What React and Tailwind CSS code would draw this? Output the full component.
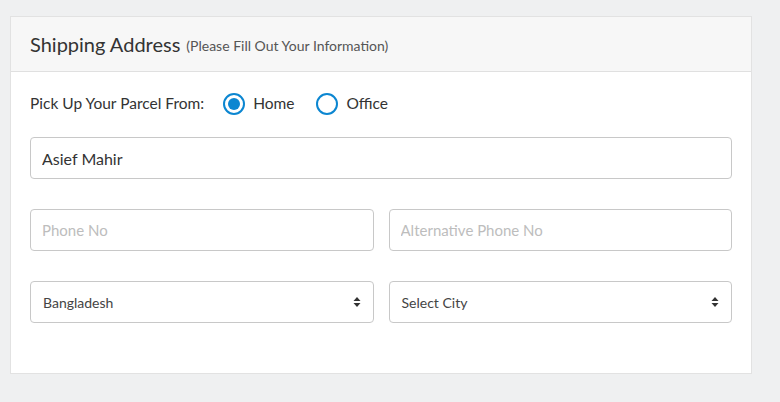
import React, { useState } from "react";

function Radio({ label, checked, onClick }) {
    return (
        <button type="button" onClick={onClick} className="flex items-center gap-[8px] text-[15.5px] text-[#333]">
            <span className="w-[22px] h-[22px] rounded-full border-2 border-[#0b86d1] flex items-center justify-center">
                {checked && <span className="w-[12px] h-[12px] rounded-full bg-[#0b86d1]" />}
            </span>
            {label}
        </button>
    );
}

function SortArrows() {
    return (
        <svg width="8" height="11" viewBox="0 0 8 11" className="absolute right-[13px] top-1/2 -translate-y-1/2 pointer-events-none">
            <path d="M4 0.5 L7.5 4.5 H0.5 Z" fill="#333" />
            <path d="M4 10.5 L7.5 6.5 H0.5 Z" fill="#333" />
        </svg>
    );
}

function Select({ value }) {
    return (
        <div className="relative">
            <div className="h-[42px] border border-[#c8c8c8] rounded-[4px] px-[12px] flex items-center text-[14px] text-[#444]">{value}</div>
            <SortArrows />
        </div>
    );
}

export default function App() {
    const [pickup, setPickup] = useState("home");

    return (
        <div className="w-[780px] h-[402px] bg-[#eff0f1] pt-4 pl-[10px]" style={{ fontFamily: "Lato, 'Open Sans', sans-serif" }}>
            <div className="w-[742px] h-[358px] bg-white border border-[#e2e2e2] flex flex-col">
                <div className="h-[55px] bg-[#f7f7f7] border-b border-[#e0e0e0] px-[19px] flex items-center gap-[6px]">
                    <span className="text-[20px] text-[#333]">Shipping Address</span>
                    <span className="text-[14px] text-[#555] mt-[3px]">(Please Fill Out Your Information)</span>
                </div>
                <div className="px-[19px] pt-[21px]">
                    <div className="flex items-center h-[22px] text-[15.5px] text-[#333]">
                        <span className="mr-[19px]">Pick Up Your Parcel From:</span>
                        <Radio label="Home" checked={pickup === "home"} onClick={() => setPickup("home")} />
                        <span className="w-[22px]" />
                        <Radio label="Office" checked={pickup === "office"} onClick={() => setPickup("office")} />
                    </div>
                    <input
                        defaultValue="Asief Mahir"
                        className="mt-[22px] w-full h-[42px] border border-[#c8c8c8] rounded-[4px] px-[11px] text-[16px] text-[#333] outline-none"
                    />
                    <div className="grid grid-cols-2 gap-[15px] mt-[30px]">
                        <input placeholder="Phone No" className="h-[42px] border border-[#c8c8c8] rounded-[4px] px-[11px] text-[15px] placeholder:text-[#bdbdbd] outline-none" />
                        <input placeholder="Alternative Phone No" className="h-[42px] border border-[#c8c8c8] rounded-[4px] px-[11px] text-[15px] placeholder:text-[#bdbdbd] outline-none" />
                    </div>
                    <div className="grid grid-cols-2 gap-[15px] mt-[30px]">
                        <Select value="Bangladesh" />
                        <Select value="Select City" />
                    </div>
                </div>
            </div>
        </div>
    );
}
